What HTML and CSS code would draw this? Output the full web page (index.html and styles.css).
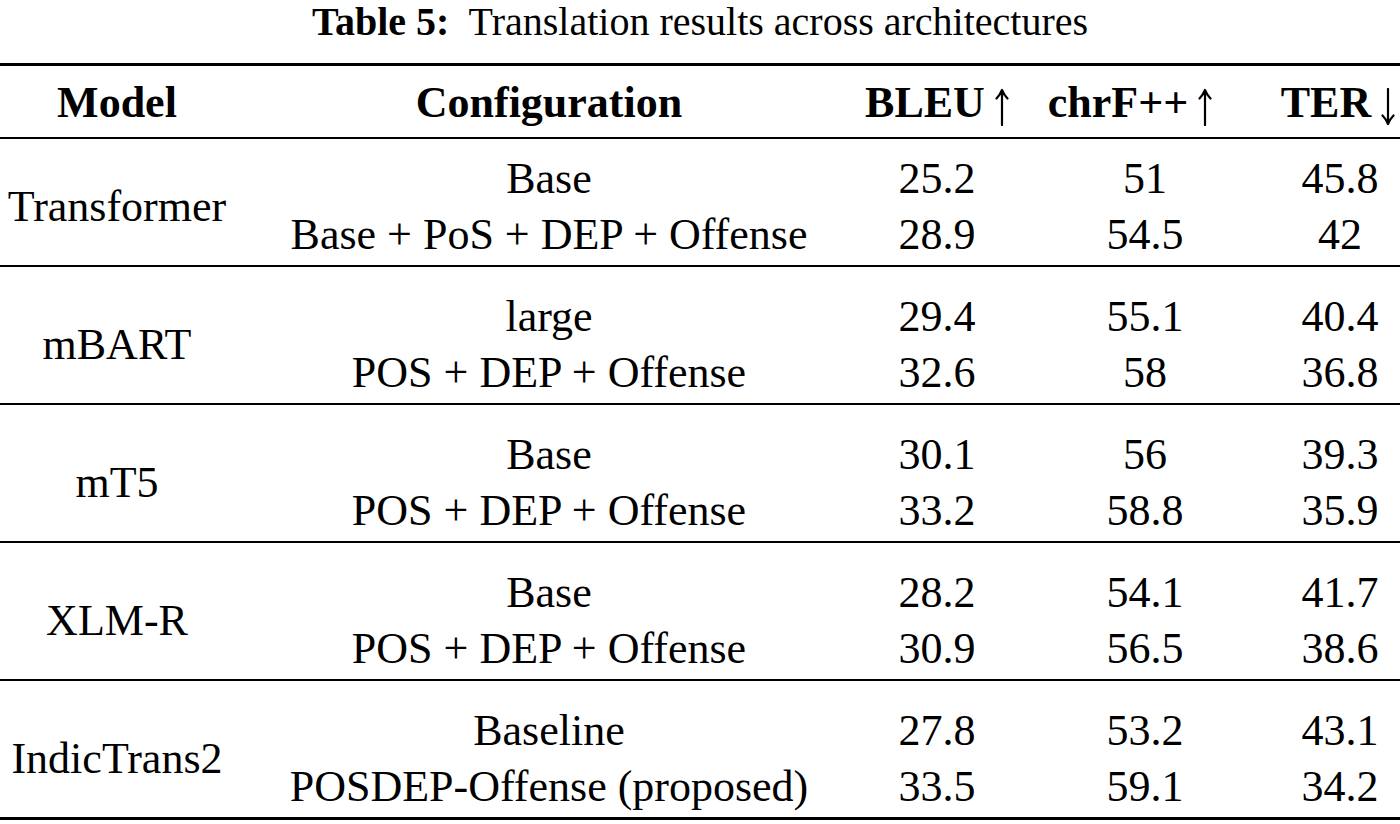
FILE: index.html
```html
<!DOCTYPE html>
<html lang="en">
<head>
<meta charset="utf-8">
<title>Table 5</title>
<link rel="stylesheet" href="styles.css">
</head>
<body>
<div class="page">
  <div class="caption"><b>Table 5:</b>&nbsp; Translation results across architectures</div>
  <table class="results">
    <colgroup>
      <col class="c-model">
      <col class="c-config">
      <col class="c-bleu">
      <col class="c-chrf">
      <col class="c-ter">
    </colgroup>
    <thead>
      <tr>
        <th>Model</th>
        <th>Configuration</th>
        <th>BLEU<svg class="arrow" viewBox="0 0 14 38" width="14" height="38" aria-label="higher is better"><path d="M7 37 V3 M1.5 10.5 Q5 7 7 2 Q9 7 12.5 10.5"/></svg></th>
        <th class="h-chrf">chrF++<svg class="arrow" viewBox="0 0 14 38" width="14" height="38" aria-label="higher is better"><path d="M7 37 V3 M1.5 10.5 Q5 7 7 2 Q9 7 12.5 10.5"/></svg></th>
        <th class="h-ter">TER<svg class="arrow" viewBox="0 0 14 38" width="14" height="38" aria-label="lower is better"><path d="M7 1 V35 M1.5 27.5 Q5 31 7 36 Q9 31 12.5 27.5"/></svg></th>
      </tr>
    </thead>
    <tbody class="first">
      <tr class="top">
        <td rowspan="2" class="model">Transformer</td>
        <td>Base</td><td>25.2</td><td>51</td><td>45.8</td>
      </tr>
      <tr class="end">
        <td>Base + PoS + DEP + Offense</td><td>28.9</td><td>54.5</td><td>42</td>
      </tr>
    </tbody>
    <tbody>
      <tr class="top">
        <td rowspan="2" class="model">mBART</td>
        <td>large</td><td>29.4</td><td>55.1</td><td>40.4</td>
      </tr>
      <tr class="end">
        <td>POS + DEP + Offense</td><td>32.6</td><td>58</td><td>36.8</td>
      </tr>
    </tbody>
    <tbody>
      <tr class="top">
        <td rowspan="2" class="model">mT5</td>
        <td>Base</td><td>30.1</td><td>56</td><td>39.3</td>
      </tr>
      <tr class="end">
        <td>POS + DEP + Offense</td><td>33.2</td><td>58.8</td><td>35.9</td>
      </tr>
    </tbody>
    <tbody>
      <tr class="top">
        <td rowspan="2" class="model">XLM-R</td>
        <td>Base</td><td>28.2</td><td>54.1</td><td>41.7</td>
      </tr>
      <tr class="end">
        <td>POS + DEP + Offense</td><td>30.9</td><td>56.5</td><td>38.6</td>
      </tr>
    </tbody>
    <tbody class="last">
      <tr class="top">
        <td rowspan="2" class="model">IndicTrans2</td>
        <td>Baseline</td><td>27.8</td><td>53.2</td><td>43.1</td>
      </tr>
      <tr class="end">
        <td>POSDEP-Offense (proposed)</td><td>33.5</td><td>59.1</td><td>34.2</td>
      </tr>
    </tbody>
  </table>
</div>
</body>
</html>
```

FILE: styles.css
```css
html, body {
  margin: 0;
  padding: 0;
  background: #ffffff;
}

body {
  font-family: "Liberation Serif", "Times New Roman", serif;
  color: #000000;
  width: 1400px;
}

.page {
  display: flex;
  flex-direction: column;
}

.caption {
  font-size: 40px;
  line-height: 44px;
  text-align: center;
  height: 44px;
  margin-bottom: 19px;
  white-space: pre;
}

.caption b {
  font-weight: 700;
}

.results {
  width: 1400px;
  border-collapse: separate;
  border-spacing: 0;
  table-layout: fixed;
  font-size: 44px;
  line-height: 56px;
}

.c-model { width: 234px; }
.c-config { width: 630px; }
.c-bleu { width: 146px; }
.c-chrf { width: 270px; }
.c-ter { width: 120px; }

.results th,
.results td {
  padding: 0;
  text-align: center;
  vertical-align: middle;
  white-space: nowrap;
}

.results th {
  font-weight: 700;
  border-top: 3px solid #000;
  border-bottom: 2px solid #000;
  padding-top: 9px;
  padding-bottom: 6px;
}

.results th.h-chrf {
  padding-right: 30px;
}

.results th.h-ter {
  padding-right: 4px;
}

.arrow {
  margin-left: 10px;
  vertical-align: -9px;
  fill: none;
  stroke: #000;
  stroke-width: 2.2;
  stroke-linecap: round;
  stroke-linejoin: round;
}

.results tr.top td {
  padding-top: 22px;
}

.results tbody.first tr.top td {
  padding-top: 12px;
}

.results tr.end td,
.results td.model {
  padding-bottom: 2px;
  border-bottom: 2px solid #000;
}

.results tbody.last tr.end td,
.results tbody.last td.model {
  border-bottom-width: 3px;
}
```
